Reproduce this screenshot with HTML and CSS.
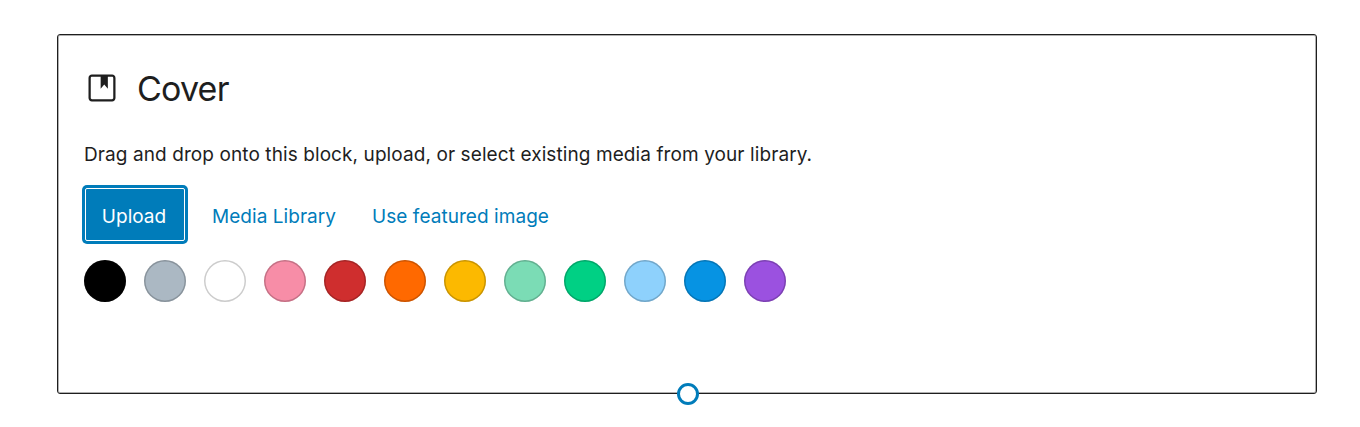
FILE: index.html
```html
<!DOCTYPE html>
<html lang="en">
<head>
<meta charset="utf-8">
<title>Cover</title>
<link rel="stylesheet" href="styles.css">
</head>
<body>
<div class="block">
  <div class="label">
    <svg class="label-icon" width="36" height="36" viewBox="0 0 24 24" aria-hidden="true"><path d="M18.7 3H5.3C4 3 3 4 3 5.3v13.4C3 20 4 21 5.3 21h13.4c1.3 0 2.3-1 2.3-2.3V5.3C21 4 20 3 18.7 3zm.8 15.7c0 .4-.4.8-.8.8H5.3c-.4 0-.8-.4-.8-.8V5.3c0-.4.4-.8.8-.8h5.8v8l2.4-2.9 2.4 2.9v-8h2.8c.4 0 .8.4.8.8v13.4z" fill="#1e1e1e"/></svg>
    <h2 class="title">Cover</h2>
  </div>
  <p class="instructions">Drag and drop onto this block, upload, or select existing media from your library.</p>
  <div class="actions">
    <button class="btn-primary" type="button"><span class="btn-inner">Upload</span></button>
    <a class="link" href="#">Media Library</a>
    <a class="link" href="#">Use featured image</a>
  </div>
  <div class="swatches">
    <span class="swatch s-black"></span>
    <span class="swatch s-gray"></span>
    <span class="swatch s-white"></span>
    <span class="swatch s-pink"></span>
    <span class="swatch s-red"></span>
    <span class="swatch s-orange"></span>
    <span class="swatch s-amber"></span>
    <span class="swatch s-mint"></span>
    <span class="swatch s-green"></span>
    <span class="swatch s-sky"></span>
    <span class="swatch s-blue"></span>
    <span class="swatch s-purple"></span>
  </div>
  <span class="handle"></span>
</div>
</body>
</html>
```
FILE: styles.css
```css
* { box-sizing: border-box; }
html, body { margin: 0; padding: 0; background: #fff; }
body {
  padding: 34px 43px 33px 57px;
  font-family: Inter, "Liberation Sans", sans-serif;
  color: #1e1e1e;
}
.block {
  position: relative;
  height: 360px;
  border: 1px solid #1e1e1e;
  border-radius: 3px;
  box-shadow: inset 0 0 0 1px rgba(30,30,30,.35);
  padding: 35px 26px 0;
}
.label { display: flex; align-items: center; gap: 17px; height: 36px; }
.label-icon { flex: none; }
.title { margin: 0; padding-top: 2px; font-size: 34px; font-weight: 400; line-height: 36px; letter-spacing: -.8px; }
.instructions { margin: 36px 0 0; font-size: 19px; line-height: 26px; letter-spacing: .09px; }
.actions { display: flex; align-items: center; margin: 17px 0 0 -2px; height: 59px; }
.btn-primary {
  width: 106px; height: 59px;
  background: #007cba; border: 0; border-radius: 5px;
  display: flex; padding: 3px;
  font: inherit;
}
.btn-inner {
  flex: 1; display: flex; align-items: center; justify-content: center;
  padding: 4px 2px 0 0;
  border: 1px solid #fff; border-radius: 2px; color: #fff; font-size: 19px;
}
.link { color: #007cba; text-decoration: none; font-size: 19px; letter-spacing: .05px; margin-left: 36px; padding-top: 4px; }
.btn-primary + .link { margin-left: 24px; }
.swatches { display: flex; gap: 18px; margin-top: 16px; }
.swatch { width: 42px; height: 42px; border-radius: 50%; box-shadow: inset 0 0 0 1.5px rgba(0,0,0,.2); }
.s-black { background: #000; }
.s-gray { background: #abb8c3; }
.s-white { background: #fff; }
.s-pink { background: #f78da7; }
.s-red { background: #cf2e2e; }
.s-orange { background: #ff6900; }
.s-amber { background: #fcb900; }
.s-mint { background: #7bdcb5; }
.s-green { background: #00d084; }
.s-sky { background: #8ed1fc; }
.s-blue { background: #0693e3; }
.s-purple { background: #9b51e0; }
.handle {
  position: absolute; left: 619px; bottom: -12px;
  width: 22px; height: 22px; border-radius: 50%;
  background: #fff; border: 3px solid #007cba;
}
```
